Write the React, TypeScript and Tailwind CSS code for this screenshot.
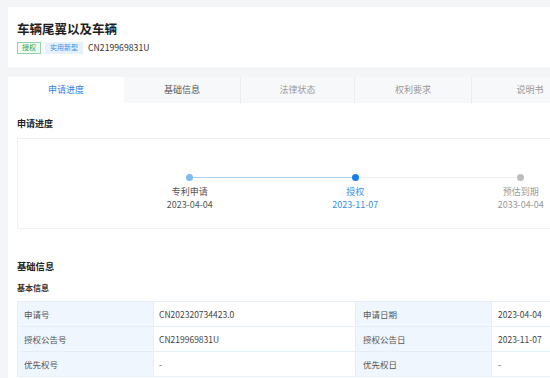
import React from "react";

const font = { fontFamily: '"Noto Sans CJK SC", "Noto Sans", sans-serif' };

function Step({
  label,
  date,
  left,
  right,
  dot,
  text,
}: {
  label: string;
  date: string;
  left: string;
  right: string;
  dot: string;
  text: string;
}) {
  return (
    <div className="flex w-[165.5px] shrink-0 flex-col items-center">
      <div className="relative flex h-[8px] w-full items-center">
        <div className={`h-px flex-1 ${left}`} />
        <div className={`h-px flex-1 ${right}`} />
        <div className="absolute inset-0 flex items-center justify-center">
          <div className={`h-[7px] w-[7px] rounded-full ${dot}`} />
        </div>
      </div>
      <div className={`mt-[4px] text-[9px] leading-[13px] ${text}`}>{label}</div>
      <div className={`text-[9px] leading-[13px] ${text}`}>{date}</div>
    </div>
  );
}

function Row({ a, b, c, d }: { a: string; b: string; c: string; d: string }) {
  return (
    <div className="flex h-[25px] border-b border-[#e6eef6] text-[8.5px] text-[#444]">
      <div className="flex w-[136px] shrink-0 items-center border-r border-[#e6eef6] bg-[#eff6fd] pl-[6px] text-[#555]">{a}</div>
      <div className="flex w-[202px] shrink-0 items-center border-r border-[#e6eef6] pl-[5px]">{b}</div>
      <div className="flex w-[136px] shrink-0 items-center border-r border-[#e6eef6] bg-[#eff6fd] pl-[7px] text-[#555]">{c}</div>
      <div className="flex flex-1 items-center pl-[6px]">{d}</div>
    </div>
  );
}

export default function App() {
  return (
    <div className="h-[378px] w-[550px] overflow-hidden bg-[#f4f5f7] pl-[8px] pt-[7px]" style={font}>
      {/* header card */}
      <div className="h-[60px] bg-white pl-[9px] pt-[13px]">
        <div className="text-[12.5px] font-bold leading-[18px] text-[#1f1f1f]">车辆尾翼以及车辆</div>
        <div className="mt-[3px] flex items-center">
          <span className="flex h-[12px] items-center border border-[#8fd4ab] bg-[#eefaf3] px-[4px] text-[7px] leading-none text-[#2aa55c]">授权</span>
          <span className="ml-[4px] flex h-[12px] items-center bg-[#e6f1fc] px-[5px] text-[7px] leading-none text-[#3a8ee6]">实用新型</span>
          <span className="ml-[5px] text-[8.7px] text-[#333]">CN219969831U</span>
        </div>
      </div>

      {/* tabs */}
      <div className="mt-[10px] flex h-[26px] overflow-hidden bg-[#f7f8fa] text-[9px]">
        <div className="flex w-[116px] shrink-0 items-center justify-center bg-white text-[#2c83e6]">申请进度</div>
        <div className="flex w-[117px] shrink-0 items-center justify-center border-r border-[#ebecee] text-[#555]">基础信息</div>
        <div className="flex w-[114px] shrink-0 items-center justify-center border-r border-[#ebecee] text-[#999]">法律状态</div>
        <div className="flex w-[117px] shrink-0 items-center justify-center border-r border-[#ebecee] text-[#999]">权利要求</div>
        <div className="flex w-[116px] shrink-0 items-center justify-center text-[#999]">说明书</div>
      </div>

      {/* body */}
      <div className="h-[300px] bg-white pl-[9px] pt-[15px]">
        <div className="text-[9px] font-bold leading-[12px] text-[#222]">申请进度</div>
        <div className="-mr-[20px] mt-[8px] h-[91px] overflow-hidden border border-[#eef0f2] pt-[34px]">
          <div className="ml-[89px] flex">
            <Step label="专利申请" date="2023-04-04" left="" right="bg-[#a9d2f5]" dot="bg-[#7fbaf0]" text="text-[#555]" />
            <Step label="授权" date="2023-11-07" left="bg-[#a9d2f5]" right="bg-[#eceef1]" dot="bg-[#1a7ee8]" text="text-[#3a8ee6]" />
            <Step label="预估到期" date="2033-04-04" left="bg-[#eceef1]" right="" dot="bg-[#bdbdbd]" text="text-[#999]" />
          </div>
        </div>

        <div className="mt-[31px] text-[9.3px] font-bold leading-[12px] text-[#222]">基础信息</div>
        <div className="mt-[10px] text-[8px] font-bold leading-[12px] text-[#333]">基本信息</div>
        <div className="mt-[7px] border-t border-l border-[#e6eef6]">
          <Row a="申请号" b="CN202320734423.0" c="申请日期" d="2023-04-04" />
          <Row a="授权公告号" b="CN219969831U" c="授权公告日" d="2023-11-07" />
          <Row a="优先权号" b="-" c="优先权日" d="-" />
        </div>
      </div>
    </div>
  );
}
